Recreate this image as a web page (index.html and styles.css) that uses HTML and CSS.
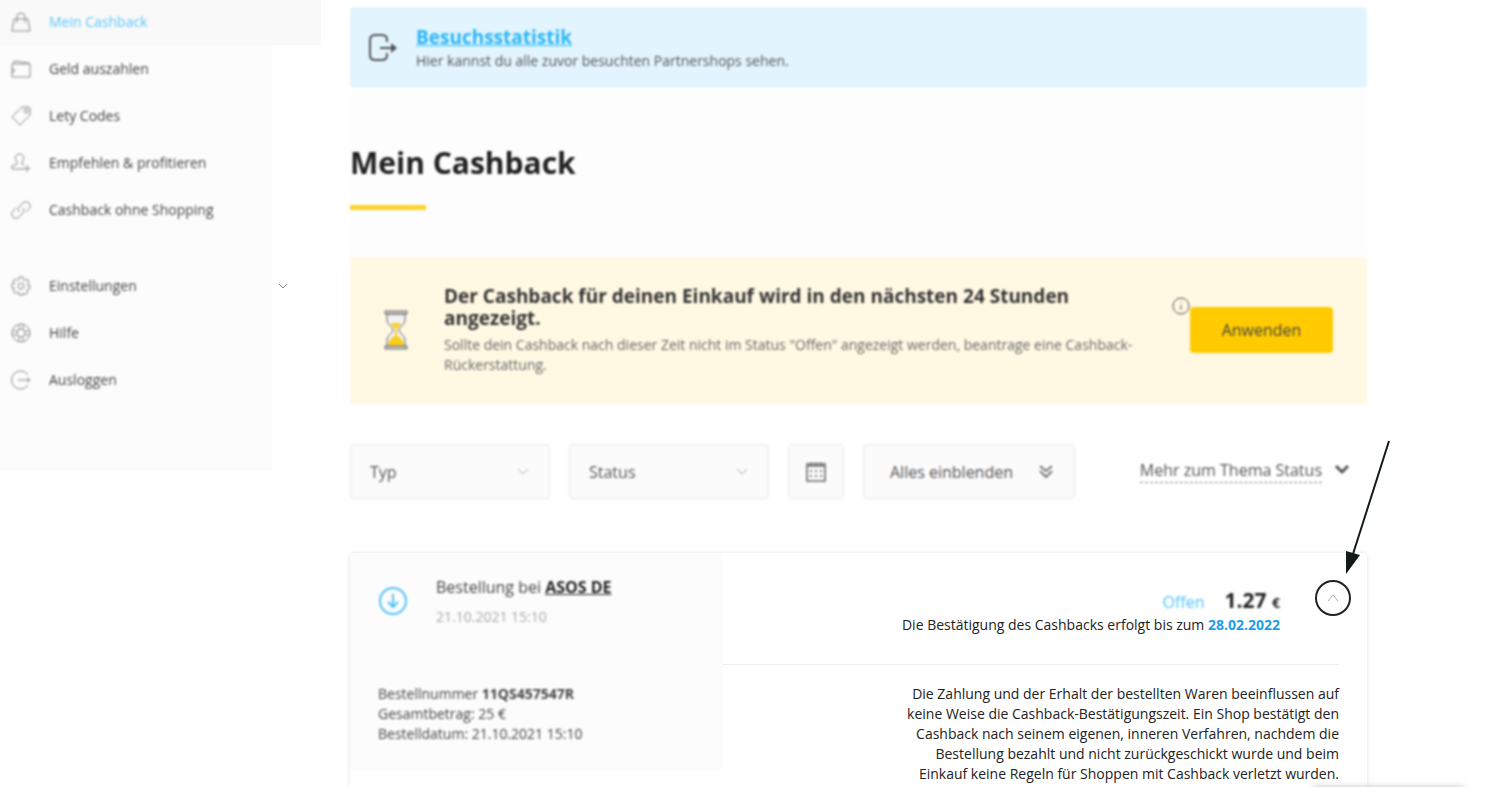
FILE: index.html
```html
<!DOCTYPE html>
<html lang="de">
<head>
    <meta charset="UTF-8">
    <meta name="viewport" content="width=device-width, initial-scale=1.0">
    <title>Mein Cashback</title>
    <link rel="stylesheet" href="styles.css">
</head>
<body>

<div class="page">

    <nav class="sidebar">
        <ul class="menu">
            <li><a href="#" class="active">
                <svg class="icon" viewBox="0 0 20 20"><path d="M3 7h14l2 12H1zM6 11V5a4 4 0 0 1 8 0v6"/></svg>
                <span>Mein Cashback</span></a></li>
            <li><a href="#">
                <svg class="icon" viewBox="0 0 20 20"><path d="M1 5h18v13H1zM3 5V2l15 2v1M1 10h2v3H1"/></svg>
                <span>Geld auszahlen</span></a></li>
            <li><a href="#">
                <svg class="icon" viewBox="0 0 20 20"><path d="M11 1h7l1 1v7L9 19l-8-8z"/><circle cx="15" cy="5" r="2"/></svg>
                <span>Lety Codes</span></a></li>
            <li><a href="#">
                <svg class="icon" viewBox="0 0 20 20"><path d="M13 16H1v-3l5-2v-2C3 6 4 1 8.500 1S14 6 11 9v2l2 1M16 12v7M12.500 15.500h7"/></svg>
                <span>Empfehlen &amp; profitieren</span></a></li>
            <li><a href="#">
                <svg class="icon" viewBox="0 0 20 20"><path d="M8 12a4 4 0 0 1 0-5l4-4a4 4 0 0 1 6 6l-3 3M12 8a4 4 0 0 1 0 5l-4 4a4 4 0 0 1-6-6l3-3"/></svg>
                <span>Cashback ohne Shopping</span></a></li>
        </ul>
        <ul class="menu">
            <li><a href="#">
                <svg class="icon" viewBox="0 0 20 20"><path d="M8 1h4v2.500l2 1L16 3l2 3-1.500 2v1l2.500.5v3l-2.500.5-.5 1 1 2.500-3 2-2-1.500V19H8v-2.500L6 16l-2 1.500L2 15l1.500-2.500L1 12V8l2.500-.5L2 5l3-2 1.500 1.500L8 3.500z"/><circle cx="10" cy="10" r="3"/></svg>
                <span>Einstellungen</span>
                <svg class="menu-chevron" viewBox="0 0 10 6"><path d="M1 1l4 4 4-4"/></svg></a></li>
            <li><a href="#">
                <svg class="icon" viewBox="0 0 20 20"><circle cx="10" cy="10" r="9"/><circle cx="10" cy="10" r="4"/><path d="M8 1v5M12 1v5M8 14v5M12 14v5M1 8h5M1 12h5M14 8h5M14 12h5"/></svg>
                <span>Hilfe</span></a></li>
            <li><a href="#">
                <svg class="icon" viewBox="0 0 20 20"><path d="M17 5a9 9 0 1 0 0 10M7 10h12M16 8l3 2-3 2"/></svg>
                <span>Ausloggen</span></a></li>
        </ul>
    </nav>

    <main class="content">

        <section class="visits">
            <svg class="visits-icon" viewBox="0 0 30 30"><path d="M19 9V7q0-5-5-5H7Q2 2 2 7v15q0 5 5 5h7q5 0 5-5v-2M12 15h13"/><path class="fill" d="M23 10l6 5-6 5z"/></svg>
            <div>
                <a href="#" class="visits-link">Besuchsstatistik</a>
                <p>Hier kannst du alle zuvor besuchten Partnershops sehen.</p>
            </div>
        </section>

        <h1>Mein Cashback</h1>

        <section class="notice">
            <svg class="hourglass" viewBox="0 0 24 40">
                <path class="glass" d="M3 4v6c0 5 6 7 6 10s-6 5-6 10v6h18v-6c0-5-6-7-6-10s6-5 6-10V4z"/>
                <path class="sand" d="M6 14q6-2 12 0l-5 4v8q6 2 7 10H4q1-8 7-10v-8z"/>
                <path class="rim" d="M1 1h22v3H1zM1 36h22v3H1z"/>
            </svg>
            <div class="notice-text">
                <h2>Der Cashback für deinen Einkauf wird in den nächsten 24 Stunden angezeigt.</h2>
                <p>Sollte dein Cashback nach dieser Zeit nicht im Status "Offen" angezeigt werden, beantrage eine Cashback-Rückerstattung.</p>
            </div>
            <svg class="info" viewBox="0 0 18 18"><circle cx="9" cy="9" r="8"/><path d="M9 8v5M9 5v1"/></svg>
            <button type="button" class="apply-btn">Anwenden</button>
        </section>

        <form class="filters">
            <div class="select-box">
                <select aria-label="Typ"><option>Typ</option></select>
                <svg class="select-chevron" viewBox="0 0 12 8"><path d="M1 1l5 5 5-5"/></svg>
            </div>
            <div class="select-box">
                <select aria-label="Status"><option>Status</option></select>
                <svg class="select-chevron" viewBox="0 0 12 8"><path d="M1 1l5 5 5-5"/></svg>
            </div>
            <button type="button" class="filter-btn calendar-btn" aria-label="Zeitraum">
                <svg viewBox="0 0 20 20"><path d="M1 2h18v17H1zM1 4h18M5 0v4M10 0v4M15 0v4"/><path class="dots" d="M4 9h12M4 14h12"/></svg>
            </button>
            <button type="button" class="filter-btn expand-btn">Alles einblenden
                <svg viewBox="0 0 16 16"><path d="M2 2l6 5 6-5M2 7l6 6 6-6"/></svg>
            </button>
            <a href="#" class="more"><span>Mehr zum Thema Status</span>
                <svg viewBox="0 0 16 12"><path d="M2 3l6 6 6-6"/></svg>
            </a>
        </form>

        <article class="order">
            <div class="order-info">
                <div class="order-head">
                    <svg class="order-icon" viewBox="0 0 30 30"><circle cx="15" cy="15" r="13"/><path d="M15 8v13M10 16l5 5 5-5"/></svg>
                    <div>
                        <p class="order-shop">Bestellung bei <a href="#">ASOS DE</a></p>
                        <p class="order-date">21.10.2021 15:10</p>
                    </div>
                </div>
                <p class="order-details">
                    Bestellnummer <b>11QS457547R</b><br>
                    Gesamtbetrag: 25 €<br>
                    Bestelldatum: 21.10.2021 15:10
                </p>
            </div>

            <div class="order-status">
                <div class="status-head">
                    <div class="status-text">
                        <div class="amount"><span class="state">Offen</span><b>1.27 <small>€</small></b></div>
                        <p>Die Bestätigung des Cashbacks erfolgt bis zum <b>28.02.2022</b></p>
                    </div>
                    <button type="button" class="toggle" aria-label="Einklappen">
                        <svg viewBox="0 0 12 8"><path d="M1 7l5-6 5 6"/></svg>
                    </button>
                </div>
                <p class="terms">Die Zahlung und der Erhalt der bestellten Waren beeinflussen auf keine Weise die Cashback-Bestätigungszeit. Ein Shop bestätigt den Cashback nach seinem eigenen, inneren Verfahren, nachdem die Bestellung bezahlt und nicht zurückgeschickt wurde und beim Einkauf keine Regeln für Shoppen mit Cashback verletzt wurden.</p>
            </div>

            <svg class="arrow" viewBox="0 0 50 140"><path d="M46 1L10 114"/><path class="fill" d="M3 111l14 4L3 134z"/></svg>
        </article>

    </main>
</div>

<div class="widget"></div>

</body>
</html>
```
FILE: styles.css
```css
* {
    box-sizing: border-box;
}

body {
    margin: 0;
    font-family: "Open Sans", "Noto Sans", sans-serif;
    font-size: 14px;
    line-height: 20px;
    color: #222;
    background: #fff;
}

h1, h2, p, ul {
    margin: 0;
    padding: 0;
}

svg {
    display: block;
    flex: none;
    fill: none;
    stroke: currentColor;
}

svg .fill {
    fill: currentColor;
    stroke: none;
}

button, select {
    font: inherit;
    color: inherit;
    cursor: pointer;
}

.page {
    display: flex;
    align-items: flex-start;
}

/* Sidebar */
.sidebar {
    flex: none;
    width: 272px;
    margin: -2px 50px 0 0;
    padding-bottom: 39px;
    background: #fcfcfc;
}

.menu {
    list-style: none;
    margin-bottom: 29px;
}

.menu a {
    display: flex;
    align-items: center;
    gap: 18px;
    height: 47px;
    padding-left: 11px;
    color: #444;
    text-decoration: none;
}

.menu a.active {
    width: 321px;
    background: #f9f9f9;
    color: #5cc8fa;
}

.menu span,
.icon {
    filter: blur(1px);
}

.icon {
    width: 20px;
    height: 20px;
    color: #888;
}

.menu-chevron {
    width: 10px;
    height: 6px;
    margin-left: auto;
    margin-right: -16px;
    color: #888;
}

/* Content */
.content {
    flex: 1;
    min-width: 0;
    margin-right: 133px;
    padding: 7px 0 0 28px;
}

.visits {
    display: flex;
    align-items: center;
    gap: 18px;
    height: 81px;
    padding-left: 18px;
    border-radius: 4px;
    background: #e2f4fe;
    color: #555;
    filter: blur(1px);
}

.visits-icon {
    width: 30px;
    height: 30px;
    stroke-width: 2;
}

.visits-link {
    display: block;
    margin-bottom: 2px;
    font-size: 19px;
    line-height: 24px;
    font-weight: bold;
    color: #29b6f6;
}

h1 {
    padding: 53px 0 47px;
    background: #fdfdfd;
    font-size: 30px;
    line-height: 44px;
    filter: blur(1px);
}

h1::after {
    content: "";
    display: block;
    width: 76px;
    height: 5px;
    margin-top: 20px;
    background: #fdd32e;
}

.notice {
    display: flex;
    align-items: center;
    height: 147px;
    padding: 0 34px 2px;
    border-radius: 2px;
    background: #fff8e3;
    filter: blur(1px);
}

.hourglass {
    width: 24px;
    height: 40px;
    margin-right: 36px;
    color: #666;
}

.hourglass .glass {
    fill: #f2f2f2;
}

.hourglass .sand {
    fill: #f9cf1c;
    stroke: none;
}

.hourglass .rim {
    fill: #ccc;
}

.notice-text {
    flex: 1;
    color: #666;
}

.notice h2 {
    max-width: 660px;
    margin-bottom: 6px;
    font-size: 19px;
    line-height: 22px;
    color: #333;
}

.info {
    align-self: flex-start;
    width: 18px;
    height: 18px;
    margin-top: 40px;
    margin-left: 24px;
    color: #555;
}

.apply-btn {
    width: 143px;
    height: 46px;
    border: none;
    border-radius: 4px;
    background: #ffcb00;
    font-size: 16px;
    color: #444;
}

/* Filters */
.filters {
    display: flex;
    gap: 19px;
    height: 55px;
    margin-top: 40px;
    font-size: 16px;
    color: #555;
    filter: blur(1px);
}

.select-box {
    position: relative;
    width: 200px;
}

.select-box select {
    appearance: none;
    width: 100%;
    height: 100%;
    padding: 0 19px;
}

.select-box select,
.filter-btn {
    border: 1px solid #e9e9e9;
    border-radius: 4px;
    background: #fbfbfb;
}

.select-chevron {
    position: absolute;
    top: 24px;
    right: 21px;
    width: 12px;
    height: 8px;
    color: #aaa;
    pointer-events: none;
}

.calendar-btn {
    width: 56px;
    padding: 0 17px;
}

.calendar-btn svg {
    width: 20px;
    height: 20px;
    stroke-width: 2;
    color: #888;
}

.calendar-btn .dots {
    stroke-dasharray: 2 3;
}

.expand-btn {
    display: flex;
    align-items: center;
    justify-content: space-between;
    width: 212px;
    padding: 0 20px 0 26px;
}

.expand-btn svg {
    width: 16px;
    height: 16px;
    stroke-width: 2;
    color: #777;
}

.more {
    display: flex;
    align-items: center;
    gap: 12px;
    height: 50px;
    margin-left: auto;
    padding-right: 17px;
    color: inherit;
    text-decoration: none;
}

.more span {
    padding-top: 2px;
    line-height: 24px;
    border-bottom: 1px dashed #888;
}

.more svg {
    width: 16px;
    height: 12px;
    stroke-width: 3;
}

/* Order card */
.order {
    position: relative;
    display: flex;
    align-items: flex-start;
    margin-top: 54px;
    border-radius: 4px 4px 0 0;
    box-shadow: 0 0 4px rgba(0, 0, 0, 0.12);
}

.order-info {
    width: 372px;
    height: 218px;
    padding: 24px 28px;
    background: #fcfcfc;
}

.order-head {
    display: flex;
    gap: 28px;
    filter: blur(1px);
}

.order-icon {
    width: 30px;
    height: 30px;
    margin-top: 9px;
    stroke-width: 2;
    color: #4fc3f7;
}

.order-shop {
    margin-bottom: 10px;
    font-size: 16px;
    color: #444;
}

.order-shop a {
    font-weight: bold;
    color: #222;
}

.order-date {
    color: #aaa;
}

.order-details {
    margin-top: 57px;
    color: #444;
    filter: blur(1px);
}

.order-status {
    flex: 1;
    padding-right: 28px;
    text-align: right;
}

.status-head {
    display: flex;
    justify-content: flex-end;
    gap: 35px;
    height: 112px;
    padding-top: 27px;
    border-bottom: 1px solid #eee;
}

.amount {
    margin-bottom: 2px;
    padding-top: 10px;
    font-size: 16px;
}

.amount span,
.amount b {
    display: inline-block;
    filter: blur(1px);
}

.amount b {
    margin-left: 20px;
    font-size: 21px;
}

.amount small {
    font-size: 14px;
}

.state {
    color: #4fc3f7;
}

.status-text p b {
    color: #189fee;
}

.toggle {
    display: flex;
    align-items: center;
    justify-content: center;
    width: 36px;
    height: 36px;
    margin-right: -12px;
    padding: 0;
    border: 2px solid #222;
    border-radius: 50%;
    background: #fff;
}

.toggle svg {
    width: 12px;
    height: 8px;
    color: #aaa;
}

.terms {
    max-width: 450px;
    margin-left: auto;
    padding: 19px 0 3px;
}

/* Pointer to the toggle */
.arrow {
    position: absolute;
    top: -113px;
    right: -26px;
    width: 50px;
    height: 140px;
    stroke-width: 2;
    color: #111a14;
}

.widget {
    position: fixed;
    right: 36px;
    bottom: -42px;
    width: 150px;
    height: 40px;
    box-shadow: 0 0 8px rgba(0, 0, 0, 0.4);
}
```
